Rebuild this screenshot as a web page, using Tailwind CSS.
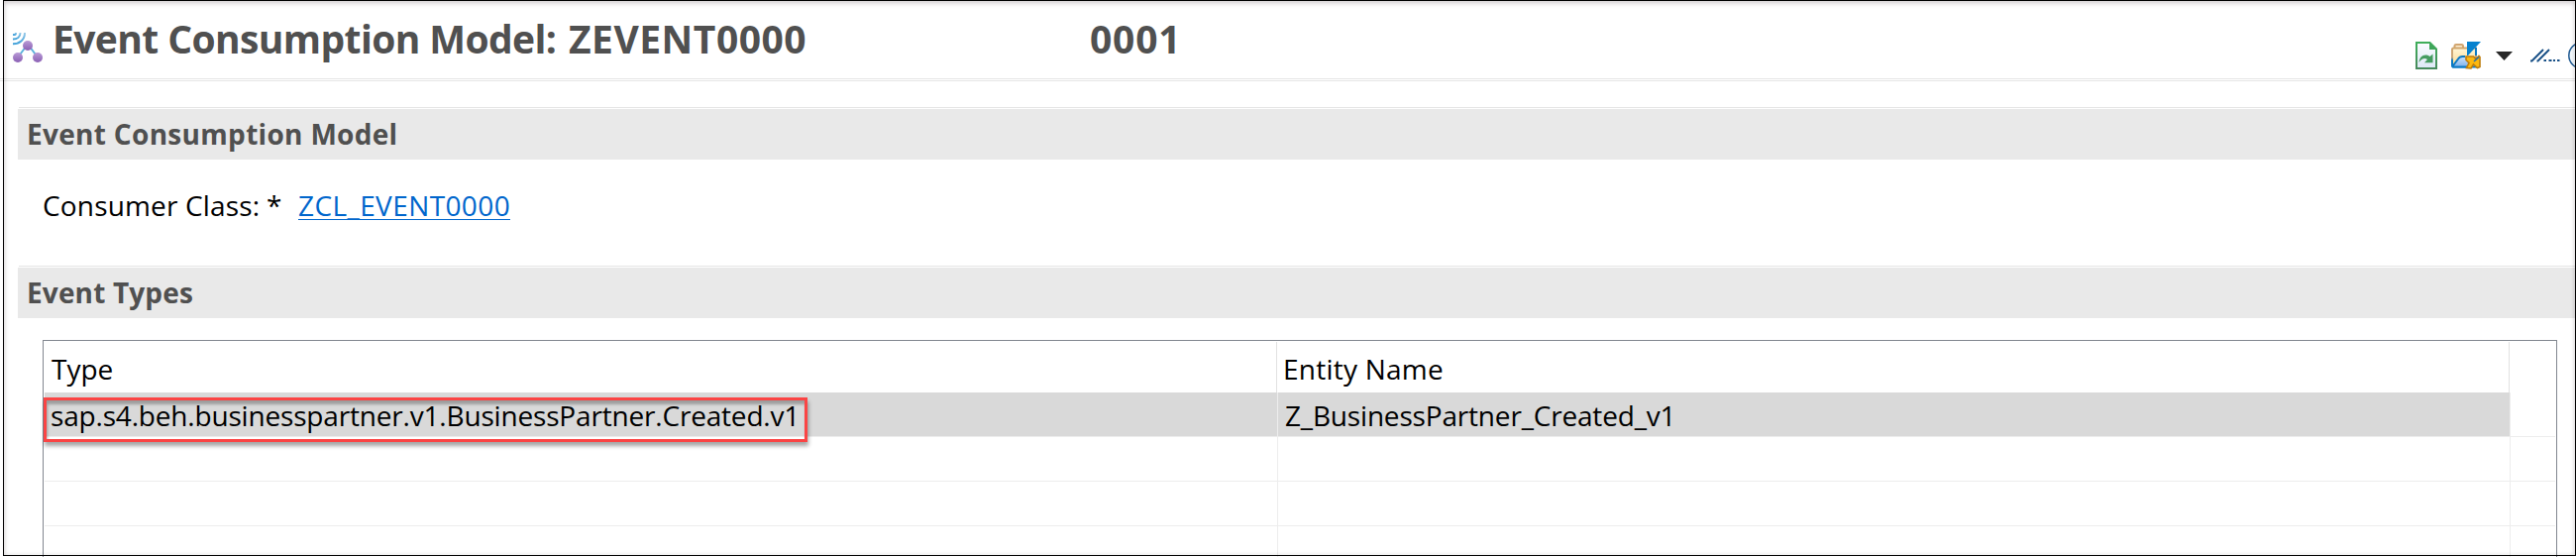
<!DOCTYPE html>
<html lang="en">
<head>
<meta charset="utf-8">
<title>Event Consumption Model</title>
<script src="https://cdn.jsdelivr.net/npm/@tailwindcss/browser@4"></script>
</head>
<body class="bg-white">
<div class="relative flex h-[562px] w-[2600px] flex-col overflow-hidden bg-white font-['Open_Sans','Noto_Sans',sans-serif] text-[28px] text-black">

  <!-- Form header -->
  <header class="flex h-[79px] shrink-0 items-start pl-[13px] whitespace-nowrap text-[#505050]">
    <svg class="mt-[32px] h-[32px] w-[31px] shrink-0" viewBox="0 0 31 32">
      <defs>
        <linearGradient id="node" x1="0" y1="0" x2="0" y2="1"><stop offset="0" stop-color="#b99bd6"/><stop offset="1" stop-color="#8a5fb4"/></linearGradient>
        <linearGradient id="wave" x1="0" y1="0" x2="0" y2="1"><stop offset="0" stop-color="#9ccbe9"/><stop offset="1" stop-color="#3fa0d9"/></linearGradient>
      </defs>
      <g fill="none" stroke="#5cb3dc" stroke-width="2">
        <path d="M0 3H1.5Q3 3 3 1" stroke="url(#wave)"/>
        <path d="M0 7.5C4.5 7.5 7.5 5 7.5 1" stroke="url(#wave)"/>
        <path d="M0 12.3C7 12.3 12 8 12 1" stroke="url(#wave)"/>
        <path d="M12 16.5L7.5 22.5M18 16.5L22.5 22.5"/>
      </g>
      <circle cx="15" cy="14" r="5" fill="url(#node)"/>
      <circle cx="5" cy="26" r="5" fill="url(#node)"/>
      <circle cx="25" cy="26" r="5" fill="url(#node)"/>
    </svg>
    <h1 class="mt-[19px] ml-[9px] flex w-[1140px] shrink-0 text-[39px] leading-[40px] font-bold">
      <span class="w-[521px] shrink-0 tracking-[-0.6px]">Event Consumption Model:</span>
      <span class="w-[526px] shrink-0 tracking-[0.5px]">ZEVENT0000</span>
      <span class="tracking-[0.8px]">0001</span>
    </h1>
    <div class="ml-auto flex h-[28px] w-[162px] shrink-0 translate-y-[42px] items-start">
      <svg class="h-[28px] w-[22px] shrink-0" viewBox="0 0 22 28">
        <defs>
          <linearGradient id="docb" x1="0" y1="0" x2="0" y2="1"><stop offset="0" stop-color="#3fae5a"/><stop offset="1" stop-color="#478a5c"/></linearGradient>
          <linearGradient id="docf" x1="0" y1="0" x2="0" y2="1"><stop offset="0" stop-color="#fbfcff"/><stop offset="1" stop-color="#dde8f6"/></linearGradient>
        </defs>
        <path d="M1 1H14.5L21 7.5V27H1Z" fill="url(#docf)" stroke="url(#docb)" stroke-width="2"/>
        <path d="M14 0L22 8H14Z" fill="#3fa65a"/>
        <path d="M3.5 21C4 15 9 11.5 14.5 15L17.5 12.5V21.3H9L12 18C9 16 6 17.5 3.5 21Z" fill="#459c60"/>
      </svg>
      <svg class="ml-[14px] h-[28px] w-[30px] shrink-0" viewBox="0 0 30 28">
        <defs>
          <linearGradient id="fold" x1="0" y1="0" x2="0" y2="1"><stop offset="0" stop-color="#fff6d8"/><stop offset="1" stop-color="#fbd98c"/></linearGradient>
          <linearGradient id="foldf" x1="0" y1="0" x2="0" y2="1"><stop offset="0" stop-color="#cfe2fa"/><stop offset="1" stop-color="#7fb2ec"/></linearGradient>
          <linearGradient id="side" x1="0" y1="0" x2="0" y2="1"><stop offset="0" stop-color="#d0a56c"/><stop offset=".5" stop-color="#c9a77c"/><stop offset=".65" stop-color="#0a79c4"/></linearGradient>
        </defs>
        <path d="M3.5 6.5V4.5Q3.5 3 5 3H10.5Q12 3 12 4.5V6.5" fill="#fdf0d5" stroke="#d2a56f" stroke-width="2"/>
        <path d="M1 8Q1 6.5 2.5 6.5H25V25.5H2.5Q1 25.5 1 24Z" fill="url(#fold)" stroke="url(#side)" stroke-width="2"/>
        <path d="M2 25L7 17.5Q8.5 15 11.5 15H17V25.5H2Z" fill="url(#foldf)"/>
        <path d="M1 25.5L7 17.5Q8.5 15 11.5 15H14M1 25.5H16" fill="none" stroke="#0a79c4" stroke-width="2"/>
        <path d="M25 6V14" stroke="#0a79c4" stroke-width="2"/>
        <path d="M16 0H30L17 14H16Z" fill="#0682cf"/>
        <path d="M15 15H22.5L25 17.5L28 14.5L29 15.5V25.5L26.5 26.5L22.5 23L20 27L15.5 26.5L18 21.5L15 18.5Z" fill="#fcb80f" stroke="#bd7c0c" stroke-width="1.6"/>
        <path d="M23 20L28 15.5" stroke="#2c70a3" stroke-width="1.6"/>
      </svg>
      <svg class="mt-[10px] ml-[15px] h-[9px] w-[17px] shrink-0" viewBox="0 0 17 9"><path d="M0 0H17L8.5 9Z" fill="#272727"/></svg>
      <svg class="mt-[7px] ml-[18px] h-[14px] w-[30px] shrink-0" viewBox="0 0 30 14">
        <path d="M0 12.5H1.5L13 1M6.5 12.5H7.5L19 1" fill="none" stroke="#174f86" stroke-width="1.9"/>
        <path d="M13.5 12H16M18.5 12H21.5M23 12H25M27 12H29.5" stroke="#174f86" stroke-width="2"/>
      </svg>
      <svg class="ml-[8px] h-[28px] w-[8px] shrink-0" viewBox="0 0 8 28"><circle cx="13.8" cy="14" r="13" fill="#f4f9fd" stroke="#1f5a92" stroke-width="1.5"/></svg>
    </div>
  </header>
  <div class="h-[3px] shrink-0 border-y border-[#e6e6e6]"></div>

  <!-- Event consumption model section -->
  <section class="mt-[26px] ml-[18px] shrink-0">
    <div class="ml-px h-[2px] border-t border-[#e5e5e5]"></div>
    <h2 class="h-[51px] bg-[#e9e9e9] pl-[9px] leading-[51px] font-bold tracking-[0.31px] text-[#505050]">Event Consumption Model</h2>
    <div class="flex h-[107px] items-start pl-[25px] leading-[93px]">
      <span class="w-[226px] shrink-0 tracking-[0.17px]">Consumer Class:</span>
      <span class="w-[32px] shrink-0">*</span>
      <a class="mt-[30px] h-[31px] border-b border-[#0066cc] leading-[33px] tracking-[0.4px] text-[#0066cc]">ZCL_EVENT0000</a>
    </div>
  </section>

  <!-- Event types section -->
  <section class="ml-[18px] shrink-0">
    <div class="ml-px h-[2px] border-t border-[#e5e5e5]"></div>
    <h2 class="h-[51px] bg-[#e9e9e9] pl-[9px] leading-[51px] font-bold tracking-[0.15px] text-[#505050]">Event Types</h2>
    <div class="mt-[22px] ml-[25px] flex h-[219px] w-[2538px] flex-col border border-b-0 border-[#828790] px-px whitespace-nowrap">
      <div class="flex h-[52px] shrink-0 pt-px leading-[54px]">
        <div class="w-[1244px] border-r border-[#e2e2e2] pl-[7px]">Type</div>
        <div class="w-[1244px] border-r border-[#e2e2e2] pl-[6px] tracking-[0.23px]">Entity Name</div>
      </div>
      <div class="flex h-[45px] shrink-0 border-b border-[#ededed] leading-[47px]">
        <div class="relative w-[1245px] border-r border-[#ededed] bg-[#d9d9d9] pl-[6px]">
          <span class="relative z-10 tracking-[-0.18px]">sap.s4.beh.businesspartner.v1.BusinessPartner.Created.v1</span>
          <div class="absolute top-[5px] left-[-1px] h-[45px] w-[771px] border-3 border-[#fb4444] shadow-[1px_4px_4px_rgba(0,0,0,0.35),inset_1px_4px_3px_rgba(0,0,0,0.28)]"></div>
        </div>
        <div class="w-[1243px] bg-[#d9d9d9] pl-[7px] leading-[46px] tracking-[-0.18px]">Z_BusinessPartner_Created_v1</div>
        <div class="w-px bg-[#ededed]"></div>
      </div>
      <div class="flex h-[45px] shrink-0 border-b border-[#ededed]"><div class="w-[1245px] border-r border-[#ededed]"></div><div class="w-[1244px] border-r border-[#ededed]"></div></div>
      <div class="flex h-[45px] shrink-0 border-b border-[#ededed]"><div class="w-[1245px] border-r border-[#ededed]"></div><div class="w-[1244px] border-r border-[#ededed]"></div></div>
      <div class="flex flex-1"><div class="w-[1245px] border-r border-[#ededed]"></div><div class="w-[1244px] border-r border-[#ededed]"></div></div>
    </div>
  </section>

  <!-- Window frame -->
  <div class="pointer-events-none absolute top-0 right-0 bottom-[1px] left-[3px] border border-black shadow-[inset_0_3px_5px_rgba(60,30,40,0.14),inset_0_0_5px_rgba(0,0,0,0.12)]"></div>
</div>
</body>
</html>
